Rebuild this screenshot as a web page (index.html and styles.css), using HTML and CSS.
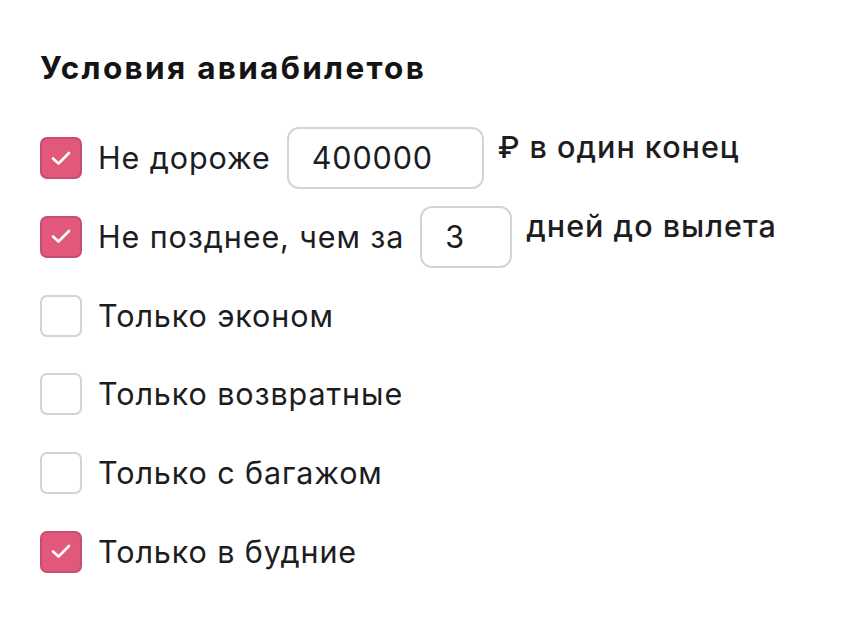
FILE: index.html
```html
<!DOCTYPE html>
<html lang="ru">
<head>
<meta charset="utf-8">
<title>Условия авиабилетов</title>
<link rel="stylesheet" href="styles.css">
</head>
<body>
<section class="panel">
  <h1 class="title">Условия авиабилетов</h1>
  <div class="list">
    <div class="row">
      <span class="box checked"><svg viewBox="0 0 42 42" class="tick"><path d="M13 21.5 L18.5 26.5 L29 16" /></svg></span>
      <span class="label">Не дороже</span>
      <span class="field wide">400000</span>
      <span class="suffix">₽ в один конец</span>
    </div>
    <div class="row">
      <span class="box checked"><svg viewBox="0 0 42 42" class="tick"><path d="M13 21.5 L18.5 26.5 L29 16" /></svg></span>
      <span class="label">Не позднее, чем за</span>
      <span class="field narrow">3</span>
      <span class="suffix">дней до вылета</span>
    </div>
    <div class="row">
      <span class="box"></span>
      <span class="label">Только эконом</span>
    </div>
    <div class="row">
      <span class="box"></span>
      <span class="label">Только возвратные</span>
    </div>
    <div class="row">
      <span class="box"></span>
      <span class="label">Только с багажом</span>
    </div>
    <div class="row">
      <span class="box checked"><svg viewBox="0 0 42 42" class="tick"><path d="M13 21.5 L18.5 26.5 L29 16" /></svg></span>
      <span class="label">Только в будние</span>
    </div>
  </div>
</section>
</body>
</html>
```
FILE: styles.css
```css
html, body {
  margin: 0;
  padding: 0;
  background: #ffffff;
}
body {
  font-family: Inter, "Noto Sans", sans-serif;
  color: #1d1d1f;
}
.panel {
  padding: 50px 40px 0 40px;
}
.title {
  margin: 0;
  font-size: 31.5px;
  line-height: 36px;
  font-weight: 700;
  letter-spacing: 2.3px;
  color: #141414;
  white-space: nowrap;
}
.list {
  margin-top: 41px;
  display: flex;
  flex-direction: column;
  gap: 16.8px;
}
.row {
  display: flex;
  align-items: center;
  min-height: 62px;
  white-space: nowrap;
}
.box {
  flex: none;
  width: 42px;
  height: 42px;
  box-sizing: border-box;
  border: 2.5px solid #d3d3d8;
  border-radius: 7px;
  background: #fff;
  display: flex;
}
.box.checked {
  background: #e1587b;
  border-color: #c64f6f;
}
.tick {
  width: 42px;
  height: 42px;
  margin: -2.5px;
}
.tick path {
  fill: none;
  stroke: #fff;
  stroke-width: 2.6;
  stroke-linecap: round;
  stroke-linejoin: round;
}
.label {
  margin-left: 16px;
  font-size: 30.5px;
  line-height: 36px;
  letter-spacing: 0.9px;
}
.field {
  flex: none;
  margin-left: 16px;
  height: 62px;
  box-sizing: border-box;
  border: 2.5px solid #d4d4d8;
  border-radius: 12px;
  font-size: 30.5px;
  line-height: 57px;
  letter-spacing: 0.9px;
  padding-left: 23px;
}
.field.wide { width: 197px; }
.field.narrow { width: 92px; }
.suffix {
  align-self: flex-start;
  margin-top: 2px;
  margin-left: 14px;
  font-size: 30.5px;
  line-height: 36px;
  letter-spacing: 1px;
  font-weight: 500;
}
```
